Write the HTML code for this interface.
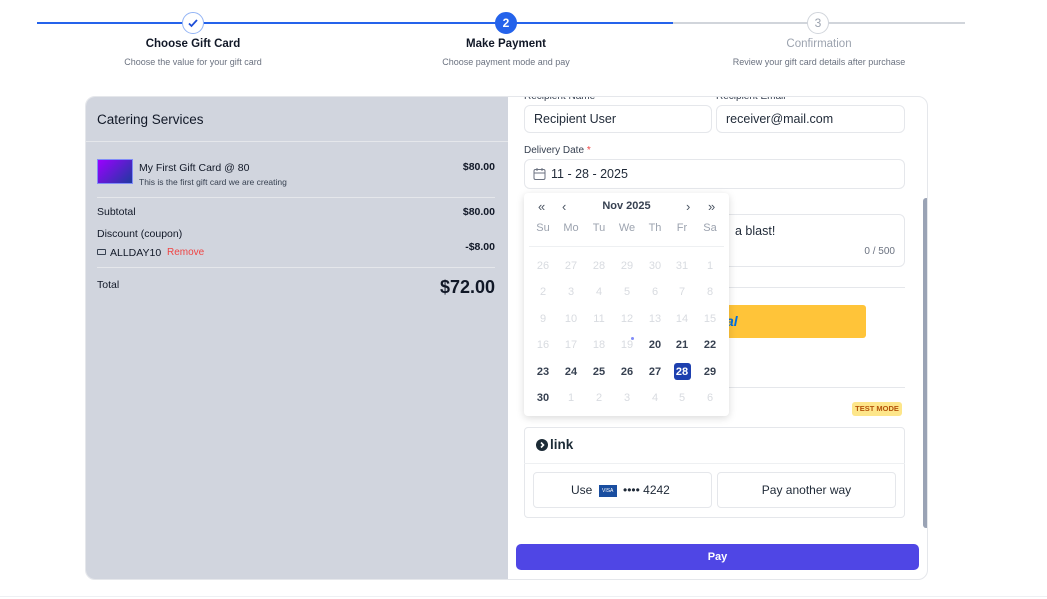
<!DOCTYPE html>
<html><head><meta charset="utf-8"><style>
*{box-sizing:border-box;margin:0;padding:0}
body{width:1047px;height:599px;background:#fff;font-family:"Liberation Sans",sans-serif;position:relative;overflow:hidden;color:#111827}
.a{position:absolute}
.line{position:absolute;height:2px;top:22px}
.circ{position:absolute;width:22px;height:22px;border-radius:50%;top:12px;text-align:center;font-size:12px;line-height:20px;font-weight:bold}
.st{position:absolute;width:300px;text-align:center;font-size:11.5px;font-weight:bold;top:38px}
.sd{position:absolute;width:300px;text-align:center;font-size:9px;color:#6b7280;top:57px}
.card{position:absolute;left:85px;top:96px;width:843px;height:484px;border:1px solid #e5e7eb;border-radius:10px;overflow:hidden;background:#fff}
.left{position:absolute;left:0;top:0;width:422px;height:484px;background:#d1d5de}
.inp{position:absolute;border:1px solid #e5e7eb;border-radius:6px;background:#fff;font-size:12.5px;color:#1f2937;padding-left:9px}
.cal{position:absolute;left:524px;top:193px;width:205px;height:223px;background:#fff;border-radius:4px;box-shadow:0 2px 8px rgba(0,0,0,.15)}
.d{position:absolute;width:28px;text-align:center;font-size:11px;font-weight:bold;color:#374151}
.g{color:#d8dbe0;font-weight:normal}
.w{position:absolute;width:28px;text-align:center;font-size:11px;color:#9ca3af}
</style></head><body>
<div class="line" style="left:37px;width:636px;background:#2563eb"></div>
<div class="line" style="left:673px;width:292px;background:#d1d5db"></div>
<div class="circ" style="left:182px;background:#fff;border:1px solid #93b4f5;color:#2563eb">
<svg width="12" height="12" viewBox="0 0 12 12" style="margin-top:4px"><path d="M2 6.5l2.5 2.5L10 3" fill="none" stroke="#1d4ed8" stroke-width="1.8"/></svg></div>
<div class="circ" style="left:495px;background:#2563eb;color:#fff;border:1px solid #2563eb">2</div>
<div class="circ" style="left:807px;background:#fff;border:1px solid #d1d5db;color:#9ca3af;font-weight:normal">3</div>
<div class="st" style="left:43px">Choose Gift Card</div>
<div class="sd" style="left:43px">Choose the value for your gift card</div>
<div class="st" style="left:356px">Make Payment</div>
<div class="sd" style="left:356px">Choose payment mode and pay</div>
<div class="st" style="left:669px;color:#9ca3af;font-weight:normal">Confirmation</div>
<div class="sd" style="left:669px">Review your gift card details after purchase</div>

<div class="card">
 <div class="left">
  <div class="a" style="left:11px;top:15px;font-size:13.5px">Catering Services</div>
  <div class="a" style="left:0;top:44px;width:422px;height:1px;background:#e5e7eb"></div>
  <div class="a" style="left:11px;top:62px;width:36px;height:25px;background:linear-gradient(135deg,#9b00ff,#1e3a9f);border:1px solid #818cf8"></div>
  <div class="a" style="left:53px;top:65px;font-size:10.5px">My First Gift Card @ 80</div>
  <div class="a" style="left:53px;top:80px;font-size:8.5px;color:#374151">This is the first gift card we are creating</div>
  <div class="a" style="right:13px;top:64px;font-size:10.5px;font-weight:bold">$80.00</div>
  <div class="a" style="left:11px;top:100px;width:398px;height:1px;background:#e5e7eb"></div>
  <div class="a" style="left:11px;top:109px;font-size:10.5px">Subtotal</div>
  <div class="a" style="right:13px;top:109px;font-size:10.5px;font-weight:bold">$80.00</div>
  <div class="a" style="left:11px;top:131px;font-size:10.5px">Discount (coupon)</div>
  <div class="a" style="right:13px;top:144px;font-size:10.5px;font-weight:bold">-$8.00</div>
  <div class="a" style="left:11px;top:152px;width:9px;height:6px;border:1px solid #374151;border-radius:1px"></div>
  <div class="a" style="left:24px;top:150px;font-size:10.5px">ALLDAY10</div>
  <div class="a" style="left:81px;top:150px;font-size:10px;color:#ef4444">Remove</div>
  <div class="a" style="left:11px;top:170px;width:398px;height:1px;background:#e5e7eb"></div>
  <div class="a" style="left:11px;top:182px;font-size:10.5px">Total</div>
  <div class="a" style="right:13px;top:180px;font-size:18px;font-weight:bold">$72.00</div>
 </div>
 <div class="a" style="left:438px;top:-6px;font-size:10px;color:#374151">Recipient Name</div>
 <div class="a" style="left:630px;top:-6px;font-size:10px;color:#374151">Recipient Email</div>
 <div class="a" style="left:837px;top:101px;width:6px;height:330px;background:#9aa3b5;border-radius:3px"></div>
 <div class="a" style="left:430px;top:447px;width:403px;height:26px;background:#4f46e5;border-radius:5px;color:#fff;font-size:11px;font-weight:bold;text-align:center;line-height:26px">Pay</div>
</div>

<div class="inp" style="left:524px;top:105px;width:188px;height:28px;line-height:27px">Recipient User</div>
<div class="inp" style="left:716px;top:105px;width:189px;height:28px;line-height:27px">receiver@mail.com</div>
<div class="a" style="left:524px;top:145px;font-size:10px;color:#374151">Delivery Date <span style="color:#ef4444">*</span></div>
<div class="inp" style="left:524px;top:159px;width:381px;height:30px;line-height:29px;padding-left:26px">11 - 28 - 2025</div>
<svg class="a" style="left:533px;top:167px" width="13" height="14" viewBox="0 0 13 14"><rect x="1" y="2.5" width="11" height="10" rx="1.5" fill="none" stroke="#6b7280" stroke-width="1"/><path d="M1 6h11M4 1v3M9 1v3" stroke="#6b7280" stroke-width="1"/></svg>
<div class="inp" style="left:524px;top:214px;width:381px;height:53px"><span class="a" style="left:210px;top:9px">a blast!</span><span class="a" style="right:9px;top:31px;font-size:10px;color:#6b7280">0 / 500</span></div>
<div class="a" style="left:524px;top:287px;width:381px;height:1px;background:#e5e7eb"></div>
<div class="a" style="left:700px;top:305px;width:166px;height:33px;background:#ffc439;border-radius:3px;color:#0070e0;font-weight:bold;font-style:italic;font-size:14px;line-height:33px;padding-left:26px">al</div>
<div class="a" style="left:524px;top:387px;width:381px;height:1px;background:#e5e7eb"></div>
<div class="a" style="left:852px;top:402px;width:50px;height:14px;background:#fde68a;border-radius:3px;color:#b45309;font-size:7.5px;font-weight:bold;text-align:center;line-height:14px">TEST MODE</div>
<div class="a" style="left:524px;top:427px;width:381px;height:91px;border:1px solid #e5e7eb;border-radius:4px"></div>
<div class="a" style="left:524px;top:463px;width:381px;height:1px;background:#eef0f2"></div>
<div class="a" style="left:536px;top:439px;width:12px;height:12px;border-radius:50%;background:#1c2b36"></div>
<svg class="a" style="left:536px;top:439px" width="12" height="12"><path d="M5 3.5L7.5 6 5 8.5" stroke="#fff" stroke-width="1.6" fill="none"/></svg>
<div class="a" style="left:550px;top:437px;font-size:13.5px;font-weight:bold;color:#1c2b36">link</div>
<div class="a" style="left:533px;top:472px;width:179px;height:36px;border:1px solid #e5e7eb;border-radius:4px;font-size:12px;color:#1f2937;line-height:35px;padding-left:37px">Use <span style="display:inline-block;width:18px;height:12px;background:#1a4ea0;color:#fff;font-size:5px;line-height:12px;text-align:center;vertical-align:middle;margin:0 3px">VISA</span> •••• 4242</div>
<div class="a" style="left:717px;top:472px;width:179px;height:36px;border:1px solid #e5e7eb;border-radius:4px;font-size:12px;color:#1f2937;line-height:35px;text-align:center">Pay another way</div>
<div class="a" style="left:0;top:596px;width:1047px;height:1px;background:#eef0f3"></div>

<div class="cal">
 <div class="a" style="left:14px;top:6px;font-size:13px;color:#4b5563">«</div>
 <div class="a" style="left:38px;top:6px;font-size:13px;color:#4b5563">‹</div>
 <div class="a" style="left:0;width:205px;top:7px;text-align:center;font-size:11px;font-weight:bold;color:#374151">Nov 2025</div>
 <div class="a" style="left:162px;top:6px;font-size:13px;color:#4b5563">›</div>
 <div class="a" style="left:184px;top:6px;font-size:13px;color:#4b5563">»</div>
 <div class="a" style="left:5px;top:53px;width:195px;height:1px;background:#eef0f2"></div>
 <div class="w" style="left:5px;top:29px">Su</div><div class="w" style="left:33px;top:29px">Mo</div><div class="w" style="left:61px;top:29px">Tu</div><div class="w" style="left:89px;top:29px">We</div><div class="w" style="left:117px;top:29px">Th</div><div class="w" style="left:144px;top:29px">Fr</div><div class="w" style="left:172px;top:29px">Sa</div>
 <div class="d g" style="left:5px;top:67px">26</div><div class="d g" style="left:33px;top:67px">27</div><div class="d g" style="left:61px;top:67px">28</div><div class="d g" style="left:89px;top:67px">29</div><div class="d g" style="left:117px;top:67px">30</div><div class="d g" style="left:144px;top:67px">31</div><div class="d g" style="left:172px;top:67px">1</div>
 <div class="d g" style="left:5px;top:93px">2</div><div class="d g" style="left:33px;top:93px">3</div><div class="d g" style="left:61px;top:93px">4</div><div class="d g" style="left:89px;top:93px">5</div><div class="d g" style="left:117px;top:93px">6</div><div class="d g" style="left:144px;top:93px">7</div><div class="d g" style="left:172px;top:93px">8</div>
 <div class="d g" style="left:5px;top:120px">9</div><div class="d g" style="left:33px;top:120px">10</div><div class="d g" style="left:61px;top:120px">11</div><div class="d g" style="left:89px;top:120px">12</div><div class="d g" style="left:117px;top:120px">13</div><div class="d g" style="left:144px;top:120px">14</div><div class="d g" style="left:172px;top:120px">15</div>
 <div class="d g" style="left:5px;top:146px">16</div><div class="d g" style="left:33px;top:146px">17</div><div class="d g" style="left:61px;top:146px">18</div><div class="d g" style="left:89px;top:146px">19</div><div class="a" style="left:107px;top:144px;width:3px;height:3px;border-radius:50%;background:#818cf8"></div><div class="d" style="left:117px;top:146px">20</div><div class="d" style="left:144px;top:146px">21</div><div class="d" style="left:172px;top:146px">22</div>
 <div class="d" style="left:5px;top:173px">23</div><div class="d" style="left:33px;top:173px">24</div><div class="d" style="left:61px;top:173px">25</div><div class="d" style="left:89px;top:173px">26</div><div class="d" style="left:117px;top:173px">27</div>
 <div class="a" style="left:150px;top:170px;width:17px;height:17px;background:#1e40af;border-radius:3px"></div><div class="d" style="left:144px;top:173px;color:#fff">28</div><div class="d" style="left:172px;top:173px">29</div>
 <div class="d" style="left:5px;top:199px">30</div><div class="d g" style="left:33px;top:199px">1</div><div class="d g" style="left:61px;top:199px">2</div><div class="d g" style="left:89px;top:199px">3</div><div class="d g" style="left:117px;top:199px">4</div><div class="d g" style="left:144px;top:199px">5</div><div class="d g" style="left:172px;top:199px">6</div>
</div>
</body></html>
